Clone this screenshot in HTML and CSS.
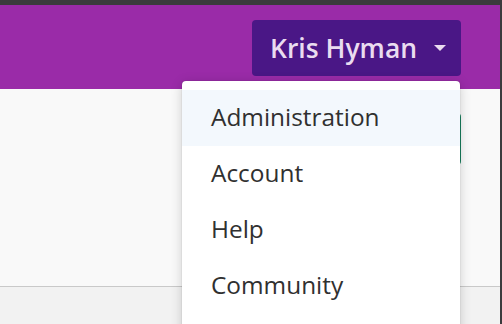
FILE: index.html
```html
<!DOCTYPE html>
<html lang="en">
<head>
    <meta charset="UTF-8">
    <meta name="viewport" content="width=device-width, initial-scale=1.0">
    <title>Account menu</title>
    <link rel="stylesheet" href="styles.css">
</head>
<body>
    <div class="page">
        <div class="topbar"></div>
        <header class="header">
            <div class="user">
                <button class="user-btn">
                    <span class="user-name">Kris Hyman</span>
                    <span class="caret"></span>
                </button>
                <div class="menu">
                    <a href="#" class="menu-item active">Administration</a>
                    <a href="#" class="menu-item">Account</a>
                    <a href="#" class="menu-item">Help</a>
                    <a href="#" class="menu-item">Community</a>
                </div>
            </div>
        </header>
        <main class="content">
            <div class="toolbar">
                <button class="green-btn">New</button>
            </div>
        </main>
        <footer class="footer"></footer>
    </div>
</body>
</html>
```

FILE: styles.css
```css
* {
    margin: 0;
    padding: 0;
    box-sizing: border-box;
    font-family: 'Open Sans', sans-serif;
}

body {
    width: 502px;
    height: 324px;
    overflow: hidden;
    background: #3b3b3d;
}

.page {
    height: 100%;
    margin-right: 2px;
    display: flex;
    flex-direction: column;
    background: #f9f9f9;
}

.topbar {
    height: 5px;
    background: #3b3b3d;
}

.header {
    height: 84px;
    background: #9a2ba8;
    display: flex;
    justify-content: flex-end;
    padding: 15px 39px 0 0;
}

.user {
    position: relative;
    z-index: 10;
}

.user-btn {
    width: 209px;
    height: 56px;
    background: #4a1786;
    border: none;
    border-radius: 4px;
    display: flex;
    align-items: center;
    padding: 0 0 0 18px;
    color: #eadcf0;
    cursor: pointer;
}

.user-name {
    font-size: 26.5px;
    font-weight: 600;
}

.caret {
    margin-left: 17px;
    border-left: 6px solid transparent;
    border-right: 6px solid transparent;
    border-top: 6px solid #eadcf0;
}

.menu {
    position: absolute;
    top: 61px;
    right: 1px;
    width: 278px;
    height: 260px;
    background: #fff;
    border-radius: 4px;
    padding-top: 9px;
    box-shadow: 0 2px 12px rgba(0, 0, 0, 0.18), 0 0 1px rgba(0, 0, 0, 0.35);
}

.menu-item {
    display: flex;
    align-items: center;
    height: 56px;
    padding: 0 0 4px 29px;
    font-size: 24.4px;
    color: #303030;
    text-decoration: none;
}

.menu-item.active {
    background: #f3f8fd;
}

.content {
    flex: 1;
    display: flex;
    flex-direction: column;
    padding: 24px 39px 0 0;
}

.toolbar {
    display: flex;
    justify-content: flex-end;
}

.green-btn {
    width: 90px;
    height: 52px;
    background: #17805e;
    color: #fff;
    border: none;
    border-radius: 4px;
    font-size: 16px;
}

.footer {
    height: 38px;
    background: #f2f2f2;
    border-top: 1px solid #c9c9c9;
}
```
